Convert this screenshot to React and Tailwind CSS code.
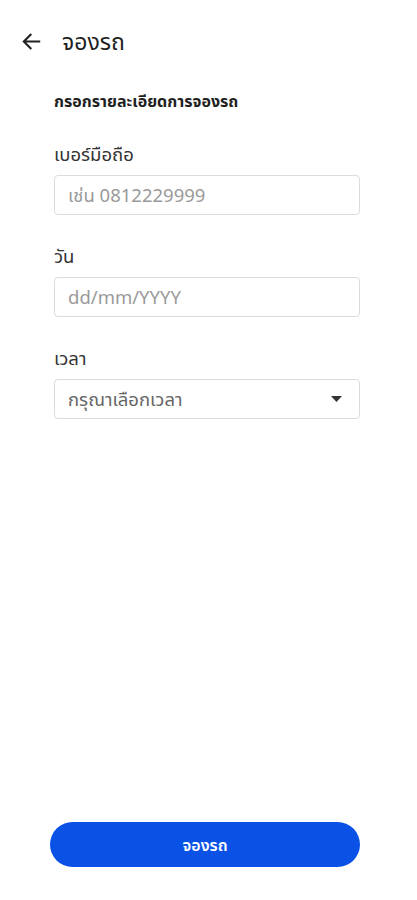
export default function App() {
  return (
    <div className="w-[417px] h-[900px] bg-white flex flex-col text-[#1f1f1f]" style={{ fontFamily: '"Noto Sans", "Noto Sans Thai", sans-serif' }}>
      <div className="flex items-center h-[44px] mt-[19px] pl-[20px]">
        <svg width="23" height="23" viewBox="0 0 24 24" fill="none" stroke="#222" strokeWidth="2.2" strokeLinecap="square">
          <path d="M20 12H5M11 5l-7 7 7 7" />
        </svg>
        <span className="ml-[19px] text-[23px] leading-none">จองรถ</span>
      </div>
      <div className="px-[54px] pt-[27px] flex flex-col">
        <div className="text-[16px] leading-[22px] font-bold">กรอกรายละเอียดการจองรถ</div>
        <label className="mt-[31px] text-[18.5px] leading-[22px] text-[#333]">เบอร์มือถือ</label>
        <div className="mt-[10px] w-[306px] h-[40px] border border-[#dcdcdc] rounded-[4px] flex items-center px-[13px] text-[18.5px] text-[#9a9a9a]">เช่น 0812229999</div>
        <label className="mt-[30px] text-[18.5px] leading-[22px] text-[#333]">วัน</label>
        <div className="mt-[10px] w-[306px] h-[40px] border border-[#dcdcdc] rounded-[4px] flex items-center px-[13px] text-[18.5px] text-[#9a9a9a]">dd/mm/YYYY</div>
        <label className="mt-[30px] text-[18.5px] leading-[22px] text-[#333]">เวลา</label>
        <div className="mt-[10px] w-[306px] h-[40px] border border-[#dcdcdc] rounded-[4px] flex items-center justify-between pl-[13px] pr-[17px] text-[18.5px] text-[#666]">
          <span>กรุณาเลือกเวลา</span>
          <svg width="11" height="6" viewBox="0 0 11 6"><path d="M0 0h11L5.5 6z" fill="#333" /></svg>
        </div>
      </div>
      <div className="flex-1" />
      <div className="px-[50px] pb-[33px]">
        <button className="w-[310px] h-[45px] rounded-full bg-[#0a52e6] text-white text-[16px] font-semibold">จองรถ</button>
      </div>
    </div>
  );
}
